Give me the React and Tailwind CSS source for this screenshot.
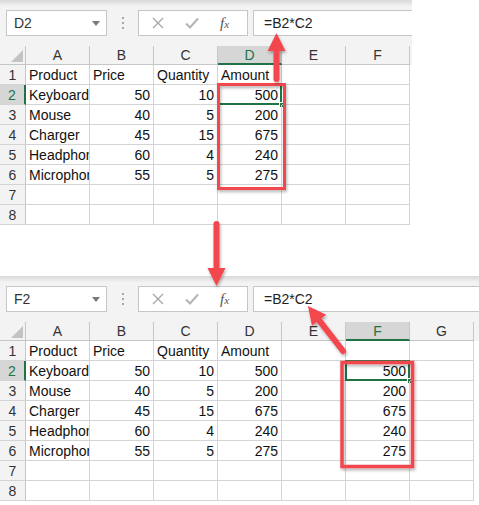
import React from "react";

const ROWS = [
  ["Product", "Price", "Quantity", "Amount"],
  ["Keyboard", 50, 10, 500],
  ["Mouse", 40, 5, 200],
  ["Charger", 45, 15, 675],
  ["Headphones", 60, 4, 240],
  ["Microphones", 55, 5, 275],
  [],
  [],
];

const RED = "#f2474d";

function Toolbar({ name, formula }) {
  return (
    <div className="h-[46px] bg-gradient-to-b from-[#d9d9d9] via-[#f3f3f3] via-[14%] to-[#f3f3f3] flex items-start pt-[10px] pl-[6px]">
      <div className="w-[101px] h-[26px] bg-white border border-[#c6c6c6] flex items-center justify-between pl-[7px] pr-[6px] text-[14px] text-[#333]">
        <span>{name}</span>
        <span className="w-0 h-0 border-x-[4px] border-x-transparent border-t-[5px] border-t-[#7a7a7a]" />
      </div>
      <div className="w-[31px] h-[26px] flex flex-col items-center justify-center gap-[3px]">
        <span className="w-[2px] h-[2px] bg-[#a8a8a8]" />
        <span className="w-[2px] h-[2px] bg-[#a8a8a8]" />
        <span className="w-[2px] h-[2px] bg-[#a8a8a8]" />
      </div>
      <div className="w-[110px] h-[26px] bg-white border border-[#c6c6c6] flex items-center pl-[13px] gap-[21px]">
        <svg width="12" height="12" viewBox="0 0 12 12">
          <path d="M1 1L11 11M11 1L1 11" stroke="#a6a6a6" strokeWidth="1.3" />
        </svg>
        <svg width="14" height="12" viewBox="0 0 14 12">
          <path d="M1 6.5L5 10.5L13 1.5" stroke="#b4b4b4" strokeWidth="2" fill="none" />
        </svg>
        <span className="font-['Liberation_Serif',serif] italic text-[15px] text-[#555] leading-none">
          f<span className="text-[11px]">x</span>
        </span>
      </div>
      <div className="ml-[5px] flex-1 h-[26px] bg-white border border-r-0 border-[#c6c6c6] flex items-center pl-[10px] text-[14px] text-[#222]">
        {formula}
      </div>
    </div>
  );
}

function Sheet({ name, formula, cols, selCol, data, className }) {
  return (
    <div className={className}>
      <Toolbar name={name} formula={formula} />
      <div className="flex h-[19px] bg-[#f3f3f3]">
        <div className="w-[26px] shrink-0 border-r border-b border-[#c6c6c6] relative">
          <svg className="absolute right-[2px] bottom-[2px]" width="12" height="12" viewBox="0 0 12 12">
            <polygon points="12,0 12,12 0,12" fill="#c3c3c3" />
          </svg>
        </div>
        {cols.map((c) =>
          c === selCol ? (
            <div
              key={c}
              className="w-[64px] shrink-0 bg-[#d6d6d6] border-r border-[#c6c6c6] border-b-2 border-b-[#217346] text-center text-[14px] leading-[19px] text-[#217346]"
            >
              {c}
            </div>
          ) : (
            <div
              key={c}
              className="w-[64px] shrink-0 border-r border-b border-[#c6c6c6] text-center text-[14px] leading-[19px] text-[#333]"
            >
              {c}
            </div>
          )
        )}
      </div>
      {data.map((row, i) => (
        <div key={i} className="flex h-[20px]">
          {i === 1 ? (
            <div className="w-[26px] shrink-0 bg-[#d6d6d6] border-r-2 border-r-[#217346] border-b border-b-[#d4d4d4] text-center text-[14px] leading-[21px] text-[#217346]">
              {i + 1}
            </div>
          ) : (
            <div className="w-[26px] shrink-0 bg-[#f3f3f3] border-r border-r-[#c6c6c6] border-b border-b-[#d4d4d4] text-center text-[14px] leading-[21px] text-[#333]">
              {i + 1}
            </div>
          )}
          {cols.map((c, j) => {
            const v = row[j];
            const num = typeof v === "number";
            const sel = c === selCol && i === 1;
            return (
              <div
                key={c}
                className={
                  num
                    ? "relative w-[64px] shrink-0 border-r border-b border-[#d4d4d4] px-[3px] text-right text-[14px] leading-[21px] text-[#111] whitespace-nowrap"
                    : "relative w-[64px] shrink-0 border-r border-b border-[#d4d4d4] px-[3px] text-left text-[14px] leading-[21px] text-[#111] whitespace-nowrap overflow-hidden"
                }
              >
                {v}
                {sel && (
                  <>
                    <span className="absolute -left-px -top-px -right-px -bottom-px border-2 border-[#217346]" />
                    <span className="absolute right-[-4px] bottom-[-4px] w-[6px] h-[6px] bg-[#217346] border border-white" />
                  </>
                )}
              </div>
            );
          })}
        </div>
      ))}
    </div>
  );
}

function Arrow({ x1, y1, x2, y2 }) {
  const dx = x2 - x1;
  const dy = y2 - y1;
  const len = Math.hypot(dx, dy);
  const ux = dx / len;
  const uy = dy / len;
  const hl = 18;
  const hw = 9;
  const bx = x2 - ux * hl;
  const by = y2 - uy * hl;
  const px = -uy;
  const py = ux;
  const pts = `${x2},${y2} ${bx + px * hw},${by + py * hw} ${bx - px * hw},${by - py * hw}`;
  return (
    <g filter="url(#sh)">
      <line x1={x1} y1={y1} x2={bx + ux * 2} y2={by + uy * 2} stroke={RED} strokeWidth="6" strokeLinecap="round" />
      <polygon points={pts} fill={RED} />
    </g>
  );
}

export default function App() {
  const top = ROWS;
  const bottom = ROWS.map((r, i) => (i >= 1 && i <= 5 ? [...r, undefined, r[3]] : r));
  return (
    <div className="relative w-[479px] h-[505px] bg-white overflow-hidden font-['Liberation_Sans',Arial,sans-serif]">
      <Sheet
        className="w-[412px] overflow-hidden"
        name="D2"
        formula="=B2*C2"
        cols={["A", "B", "C", "D", "E", "F"]}
        selCol="D"
        data={top}
      />
      <Sheet
        className="mt-[51px] w-[479px] overflow-hidden"
        name="F2"
        formula="=B2*C2"
        cols={["A", "B", "C", "D", "E", "F", "G"]}
        selCol="F"
        data={bottom}
      />
      <svg className="absolute left-0 top-0 pointer-events-none" width="479" height="505" viewBox="0 0 479 505">
        <defs>
          <filter id="sh" x="-20%" y="-20%" width="140%" height="140%">
            <feDropShadow dx="1" dy="2" stdDeviation="1.5" floodColor="#000" floodOpacity="0.3" />
          </filter>
        </defs>
        <rect x="218.5" y="84.5" width="66" height="104" fill="none" stroke={RED} strokeWidth="3" filter="url(#sh)" />
        <rect x="342" y="362.5" width="70.5" height="104" fill="none" stroke={RED} strokeWidth="3.5" filter="url(#sh)" />
        <Arrow x1={276.5} y1={79} x2={276.5} y2={33} />
        <Arrow x1={216.5} y1={224} x2={216.5} y2={286} />
        <Arrow x1={343} y1={351} x2={308} y2={306} />
      </svg>
    </div>
  );
}
